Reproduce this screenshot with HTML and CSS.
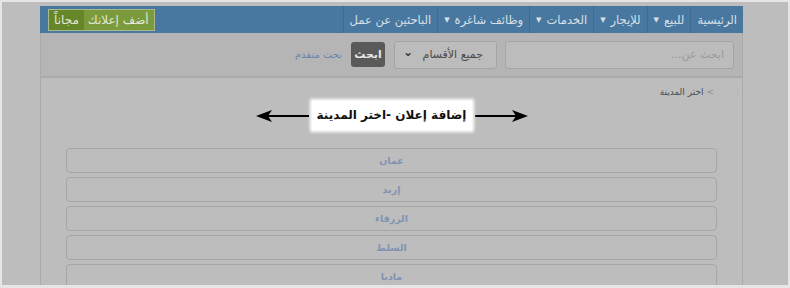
FILE: index.html
```html
<!DOCTYPE html>
<html lang="ar" dir="rtl">
<head>
<meta charset="utf-8">
<link rel="stylesheet" href="styles.css">
</head>
<body>
<div class="screen">
  <div class="page">
    <nav class="nav">
      <a class="nav-item">الرئيسية</a>
      <a class="nav-item">للبيع <span class="caret">▼</span></a>
      <a class="nav-item">للإيجار <span class="caret">▼</span></a>
      <a class="nav-item">الخدمات <span class="caret">▼</span></a>
      <a class="nav-item">وظائف شاغرة <span class="caret">▼</span></a>
      <a class="nav-item">الباحثين عن عمل</a>
      <a class="post-btn"><span class="post-main">أضف إعلانك</span><span class="post-free">مجاناً</span></a>
    </nav>
    <div class="body">
      <div class="search">
        <div class="search-input">ابحث عن...</div>
        <div class="search-select"><span>جميع الأقسام</span><span class="chev">⌄</span></div>
        <div class="search-btn">ابحث</div>
        <a class="adv">بحث متقدم</a>
      </div>
      <div class="crumbs"><span class="crumb-home">ا</span><span class="crumb-sep">&gt;</span><span class="crumb-cur">اختر المدينة</span></div>
      <div class="title-row">
        <svg class="arrow" width="53" height="14" viewBox="0 0 53 14"><line x1="0" y1="7" x2="44" y2="7" stroke="#000" stroke-width="2"/><polygon points="53,7 37,1 41,7 37,13" fill="#000"/></svg>
        <div class="title-box">إضافة إعلان -اختر المدينة</div>
        <svg class="arrow" width="53" height="14" viewBox="0 0 53 14"><line x1="9" y1="7" x2="53" y2="7" stroke="#000" stroke-width="2"/><polygon points="0,7 16,1 12,7 16,13" fill="#000"/></svg>
      </div>
      <div class="cities">
        <div class="city">عمان</div>
        <div class="city">إربد</div>
        <div class="city">الزرقاء</div>
        <div class="city">السلط</div>
        <div class="city">مادبا</div>
      </div>
    </div>
  </div>
</div>
</body>
</html>
```
FILE: styles.css
```css
* { box-sizing: border-box; }
html, body { margin: 0; padding: 0; }
body {
  background: #e6e6e6;
  font-family: "DejaVu Sans", sans-serif;
  width: 790px;
  height: 288px;
  overflow: hidden;
  padding: 2px 2px 3px 2px;
}
.screen {
  height: 283px;
  background: #bdbdbd;
  overflow: hidden;
  padding: 4px 45px 0 38px;
}
.page { width: 703px; }
.nav {
  display: flex;
  align-items: center;
  height: 27px;
  background: #4877a0;
  padding-left: 8px;
}
.nav-item {
  display: flex;
  align-items: center;
  height: 27px;
  padding: 0 6px;
  color: #d9e1e8;
  font-size: 11.5px;
  border-left: 1px solid #3f6a90;
  white-space: nowrap;
}
.caret { font-size: 7px; margin-right: 5px; }
.post-btn {
  margin-right: auto;
  display: flex;
  height: 22px;
  border: 1px solid #a9b98c;
  font-size: 12px;
  color: #e4ead8;
  white-space: nowrap;
}
.post-main {
  background: #7a9a3b;
  padding: 0 5px 0 4px;
  display: flex; align-items: center;
}
.post-free {
  background: #66862a;
  padding: 0 5px;
  display: flex; align-items: center;
}
.body {
  border-left: 1px solid #a9a9a9;
  border-right: 1px solid #a9a9a9;
  height: 260px;
}
.search {
  display: flex;
  align-items: center;
  height: 45px;
  background: #b5b5b5;
  border-bottom: 2px solid #aaaaaa;
  padding-right: 8px;
}
.search-input {
  width: 229px;
  height: 28px;
  border: 1px solid #a4a4a4;
  border-radius: 3px;
  background: #bcbcbc;
  color: #999;
  font-size: 11px;
  padding-right: 9px;
  display: flex; align-items: center;
}
.search-select {
  width: 103px;
  height: 28px;
  margin-right: 8px;
  border: 1px solid #a4a4a4;
  border-radius: 3px;
  background: #bcbcbc;
  color: #4a4a4a;
  font-size: 11px;
  display: flex; align-items: center; justify-content: space-between;
  padding: 0 13px 0 8px;
}
.chev { font-weight: bold; font-size: 12px; margin-top: -6px; color: #333; }
.search-btn {
  width: 34px;
  height: 25px;
  margin-right: 9px;
  background: #5a5a5a;
  border-radius: 3px;
  color: #e6e6e6;
  font-size: 11px;
  font-weight: bold;
  display: flex; align-items: center; justify-content: center;
}
.adv {
  margin-right: 9px;
  font-size: 10px;
  color: #6a84a8;
}
.crumbs {
  height: 20px;
  padding: 8px 3px 0 0;
  font-size: 9px;
  display: flex;
  align-items: center;
  gap: 3px;
  color: #4c4c4c;
}
.crumb-home { color: #b4b4b4; width: 22px; }
.crumb-sep { color: #8e8e8e; }
.title-row {
  display: flex;
  justify-content: center;
  align-items: center;
  height: 32px;
  margin-top: 1px;
}
.arrow { display: block; margin-top: 2px; }
.title-box {
  width: 160px;
  height: 29px;
  margin: 0 3px;
  background: #fff;
  box-shadow: 0 0 3px 2px #fff;
  color: #111;
  font-size: 12px;
  font-weight: bold;
  display: flex; align-items: center; justify-content: center;
}
.cities {
  display: flex;
  flex-direction: column;
  gap: 4px;
  padding: 17px 25px 0 25px;
}
.city {
  height: 25px;
  border: 1px solid #a6a6a6;
  border-radius: 4px;
  color: #8193b3;
  font-size: 9.5px;
  font-weight: bold;
  display: flex; align-items: center; justify-content: center;
}
```
